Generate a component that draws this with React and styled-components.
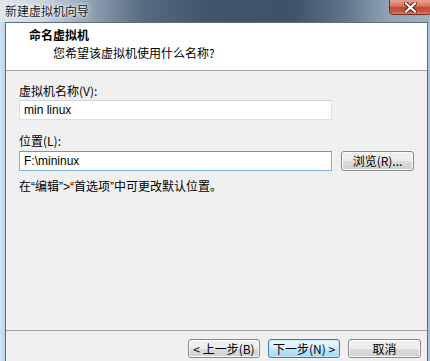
import React from "react";
import styled, { createGlobalStyle } from "styled-components";

const Global = createGlobalStyle`
  html, body { margin: 0; padding: 0; background: #f0f0f0; }
  body { font-family: "Noto Sans CJK SC", "Liberation Sans", sans-serif; font-size: 12px; color: #000; }
`;

const Window = styled.div`
  width: 430px;
  height: 361px;
  display: flex;
  flex-direction: column;
  overflow: hidden;
  background: linear-gradient(to right, #cfe2f5 0px, #bcd4ec 5px, #aac1d8 430px);
`;

const TitleBar = styled.div`
  position: relative;
  height: 22px;
  flex: none;
  display: flex;
  align-items: center;
  padding-left: 5px;
  background: linear-gradient(to right, #dfe6ed 0%, #c9d4de 10%, #8c9dad 22%, #566c80 33%, #3f5569 48%, #3e5367 68%, #5f7488 80%, #8ea2b4 90%, #9fb1c1 100%);
`;

const TitleText = styled.span`
  font-size: 12px;
  line-height: 16px;
  color: #1a1a1a;
  text-shadow: 0 0 6px #fff, 0 0 3px #fff;
`;

const CloseButton = styled.div`
  position: absolute;
  top: -1px;
  left: 389px;
  width: 43px;
  height: 16px;
  box-sizing: border-box;
  border: 1px solid #6b2d22;
  border-radius: 0 0 4px 4px;
  background: linear-gradient(to bottom, #e7a292 0%, #d67a66 40%, #c24a33 55%, #c85a41 85%, #e38a6f 100%);
  display: flex;
  align-items: center;
  justify-content: center;
`;

const Frame = styled.div`
  flex: 1;
  display: flex;
  padding: 0 2px 0 5px;
  min-height: 0;
`;

const Inner = styled.div`
  flex: 1;
  display: flex;
  flex-direction: column;
  border-top: 1px solid #5b6d7d;
  border-left: 1px solid #5b6d7d;
  border-right: 1px solid #5b6d7d;
  background: #f0f0f0;
  min-width: 0;
`;

const Header = styled.div`
  height: 48px;
  flex: none;
  background: #fff;
  border-bottom: 1px solid #a0a0a0;
  box-sizing: border-box;
  padding: 4px 0 0 23px;
`;

const HeaderTitle = styled.div`
  font-weight: bold;
  font-size: 12px;
  line-height: 16px;
`;

const HeaderSub = styled.div`
  font-size: 12px;
  line-height: 16px;
  margin: 2px 0 0 24px;
`;

const Body = styled.div`
  flex: 1;
  padding: 12px 0 0 13px;
  display: flex;
  flex-direction: column;
  align-items: flex-start;
`;

const Label = styled.div`
  line-height: 16px;
  margin-top: ${(p) => p.$top || 0}px;
`;

const Row = styled.div`
  display: flex;
  align-items: center;
  gap: 9px;
  margin-top: ${(p) => p.$top || 0}px;
`;

const Field = styled.div`
  width: 313px;
  height: 20px;
  box-sizing: border-box;
  border: 1px solid ${(p) => (p.$focus ? "#7eb4ea" : "#dedede")};
  border-top-color: ${(p) => (p.$focus ? "#569de5" : "#d3d3d3")};
  background: #fff;
  padding: 0 4px;
  line-height: 18px;
  font-size: 12px;
  font-family: "Liberation Sans", "Noto Sans CJK SC", sans-serif;
`;

const Button = styled.div`
  width: ${(p) => p.$w || 73}px;
  height: ${(p) => p.$h || 20}px;
  box-sizing: border-box;
  border: 1px solid ${(p) => (p.$default ? "#3c7fb1" : "#8a8a8a")};
  border-radius: 3px;
  background: ${(p) =>
    p.$default
      ? "linear-gradient(to bottom, #eaf6fd 0%, #d9f0fc 50%, #bee6fd 51%, #a7d9f5 100%)"
      : "linear-gradient(to bottom, #f2f2f2 0%, #ebebeb 50%, #dddddd 51%, #cfcfcf 100%)"};
  box-shadow: inset 0 0 0 1px ${(p) => (p.$default ? "#c6e6f8" : "#fbfbfb")};
  display: flex;
  align-items: center;
  justify-content: center;
  font-size: 12px;
  line-height: 16px;
  color: #000;
`;

const Hint = styled.div`
  line-height: 16px;
  margin-top: 7px;
`;

const Narrow = styled.span`
  font-family: "Liberation Sans", sans-serif;
`;

const Footer = styled.div`
  flex: none;
  height: 31px;
  border-top: 1px solid #a0a0a0;
  box-sizing: border-box;
  display: flex;
  justify-content: flex-end;
  align-items: flex-start;
  gap: 8px;
  padding: 8px 6px 0 0;
`;

export default function App() {
  return (
    <>
      <Global />
      <Window>
        <TitleBar>
          <TitleText>新建虚拟机向导</TitleText>
          <CloseButton>
            <svg width="13" height="11" viewBox="0 0 13 11">
              <path
                d="M2 1.5 L11 9.5 M11 1.5 L2 9.5"
                stroke="#5a1f16"
                strokeWidth="4"
                strokeLinecap="square"
                fill="none"
              />
              <path
                d="M2 1.5 L11 9.5 M11 1.5 L2 9.5"
                stroke="#ffffff"
                strokeWidth="2.2"
                strokeLinecap="square"
                fill="none"
              />
            </svg>
          </CloseButton>
        </TitleBar>
        <Frame>
          <Inner>
            <Header>
              <HeaderTitle>命名虚拟机</HeaderTitle>
              <HeaderSub>您希望该虚拟机使用什么名称?</HeaderSub>
            </Header>
            <Body>
              <Label>虚拟机名称(V):</Label>
              <Row $top={1}>
                <Field>min linux</Field>
              </Row>
              <Label $top={13}>位置(L):</Label>
              <Row $top={2}>
                <Field $focus>F:\mininux</Field>
                <Button $w={73}>浏览(R)...</Button>
              </Row>
              <Hint>
                在<Narrow>“</Narrow>编辑<Narrow>”&gt;“</Narrow>首选项<Narrow>”</Narrow>中可更改默认位置。
              </Hint>
            </Body>
            <Footer>
              <Button $w={72} $h={19}>&lt; 上一步(B)</Button>
              <Button $w={72} $h={19} $default>下一步(N) &gt;</Button>
              <Button $w={73} $h={19}>取消</Button>
            </Footer>
          </Inner>
        </Frame>
      </Window>
    </>
  );
}
